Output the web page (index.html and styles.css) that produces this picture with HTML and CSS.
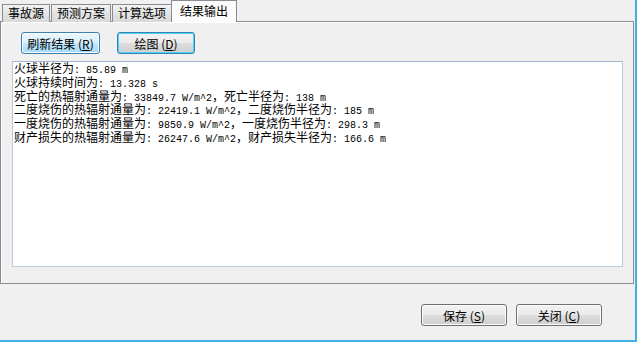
FILE: index.html
```html
<!DOCTYPE html>
<html lang="zh-CN">
<head>
    <meta charset="UTF-8">
    <title>结果输出</title>
    <link rel="stylesheet" href="styles.css">
</head>
<body>
    <div class="window">
        <div class="tabs">
            <div class="tab">事故源</div>
            <div class="tab">预测方案</div>
            <div class="tab">计算选项</div>
            <div class="tab active">结果输出</div>
        </div>

        <div class="panel">
            <div class="toolbar">
                <button class="btn hot">刷新结果 (<u>R</u>)</button>
                <button class="btn focus">绘图 (<u>D</u>)</button>
            </div>

            <div class="output">
                <div>火球半径为<span class="v">: 85.89 m</span></div>
                <div>火球持续时间为<span class="v">: 13.328 s</span></div>
                <div>死亡的热辐射通量为<span class="v">: 33849.7 W/m^2</span>，死亡半径为<span class="v">: 138 m</span></div>
                <div>二度烧伤的热辐射通量为<span class="v">: 22419.1 W/m^2</span>，二度烧伤半径为<span class="v">: 185 m</span></div>
                <div>一度烧伤的热辐射通量为<span class="v">: 9850.9 W/m^2</span>，一度烧伤半径为<span class="v">: 298.3 m</span></div>
                <div>财产损失的热辐射通量为<span class="v">: 26247.6 W/m^2</span>，财产损失半径为<span class="v">: 166.6 m</span></div>
            </div>
        </div>

        <div class="footer">
            <button class="btn wide">保存 (<u>S</u>)</button>
            <button class="btn wide">关闭 (<u>C</u>)</button>
        </div>
    </div>
</body>
</html>
```

FILE: styles.css
```css
* {
    box-sizing: border-box;
    margin: 0;
    padding: 0;
}

body {
    font-family: "Noto Sans CJK SC", "Liberation Sans", sans-serif;
    font-size: 12px;
    color: #000;
    background-color: #f0f0f0;
}

.window {
    width: 637px;
    height: 342px;
    display: flex;
    flex-direction: column;
    border-right: 2px solid #3fb3e0;
    border-bottom: 2px solid #3fb3e0;
}

/* tab strip */
.tabs {
    display: flex;
    align-items: flex-end;
    height: 22px;
    padding-left: 2px;
    position: relative;
    z-index: 1;
}

.tab {
    height: 18px;
    padding: 0 5px;
    line-height: 16px;
    border: 1px solid #898c95;
    border-bottom: none;
    margin-right: 1px;
    background: linear-gradient(#f3f3f3, #e3e3e3 50%, #d9d9d9);
}

.tab.active {
    height: 22px;
    padding: 0 8px;
    line-height: 19px;
    margin-left: -2px;
    background: #fcfcfc;
}

/* tab page */
.panel {
    height: 263px;
    margin-top: -1px;
    margin-right: 1px;
    display: flex;
    flex-direction: column;
    border: 1px solid #898c95;
    box-shadow: inset 1px 1px 0 #ffffff;
    background-color: #f0f0f0;
}

.toolbar {
    display: flex;
    gap: 17px;
    padding: 10px 0 0 20px;
}

.btn {
    height: 22px;
    width: 79px;
    font-family: inherit;
    font-size: 12px;
    color: #000;
    border: 1px solid #707070;
    border-radius: 3px;
    background: linear-gradient(#f2f2f2, #ebebeb 50%, #dddddd 51%, #cfcfcf);
    box-shadow: inset 0 0 0 1px #fcfcfc;
}

.btn u {
    text-decoration: underline;
}

.btn.hot {
    border-color: #3c7fb1;
    background: linear-gradient(#eaf6fd, #d9f0fc 50%, #bee6fd 51%, #a7d9f5);
}

.btn.focus {
    width: 78px;
    border-color: #3c7fb1;
    box-shadow: inset 0 0 0 1px #48d3fb;
}

.btn.wide {
    width: 86px;
}

.output {
    flex: 1;
    margin: 7px 10px 16px 11px;
    padding: 1px 0 0 1px;
    background-color: #fff;
    border: 1px solid #b6cbe0;
    border-top-color: #9fb6cf;
    line-height: 10.8px;
    white-space: nowrap;
}

.output .v {
    font-family: "Liberation Mono", monospace;
    font-size: 10px;
}

.footer {
    flex: 1;
    display: flex;
    justify-content: flex-end;
    gap: 9px;
    padding: 20px 33px 0 0;
}
```
